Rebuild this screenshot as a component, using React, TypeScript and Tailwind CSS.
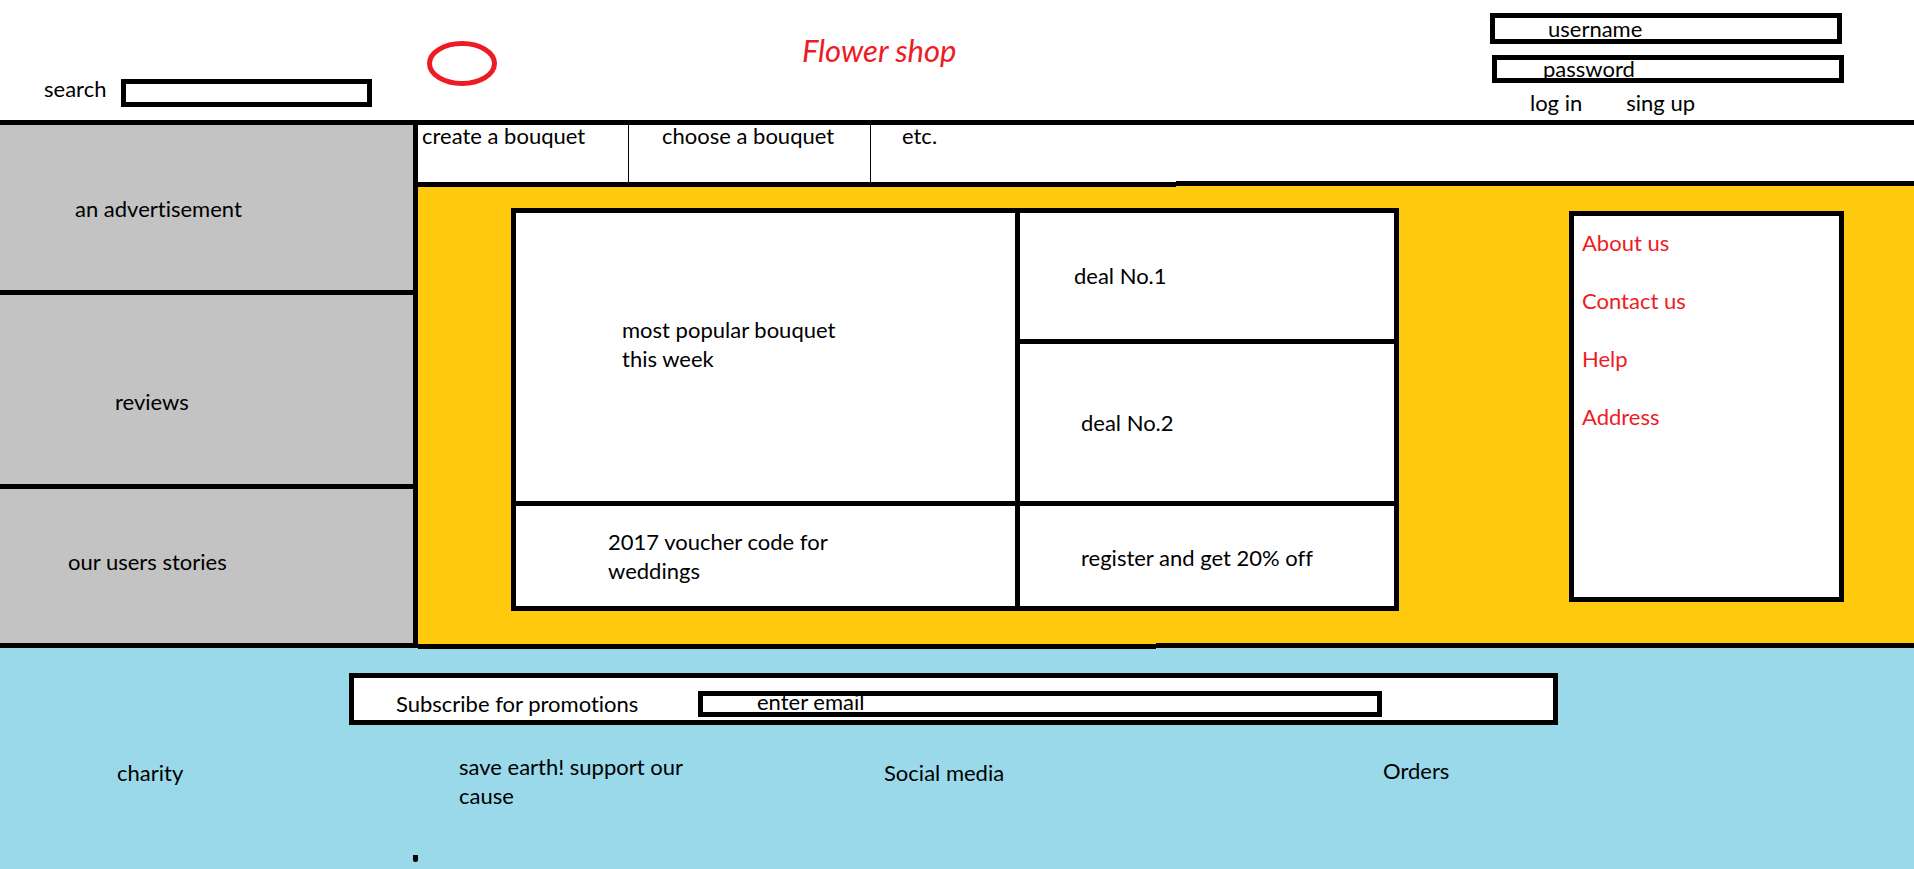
import type { ReactNode } from "react";

const fieldClass =
  "block border-5 border-black bg-white text-black outline-none placeholder:text-black placeholder:opacity-100";

function SideCell({ className, children }: { className: string; children: ReactNode }) {
  return <section className={`bg-[#c3c3c3] ${className}`}>{children}</section>;
}

function Header() {
  return (
    <header className="flex h-[125px] items-start border-b-5 border-black bg-white">
      <form role="search" className="flex w-[418px] shrink-0 items-start pt-[73px] pl-11">
        <label htmlFor="search" className="w-[77px] pt-px">
          search
        </label>
        <input id="search" type="search" className={`${fieldClass} mt-1.5 h-7 w-[251px] px-2`} />
      </form>
      <svg
        viewBox="0 0 70 46"
        className="mt-[41px] ml-[9px] h-[46px] w-[70px] shrink-0"
        fill="none"
        stroke="#ed1c24"
        strokeWidth="5"
        aria-hidden="true"
      >
        <ellipse cx="35" cy="22.5" rx="32.5" ry="20" />
      </svg>
      <h1 className="mt-8 ml-[305px] text-[31px] leading-9 whitespace-nowrap text-[#ed1c24] italic">
        Flower shop
      </h1>
      <form className="mr-[70px] ml-auto w-[354px] shrink-0 pt-[13px]">
        <input
          type="text"
          aria-label="username"
          placeholder="username"
          className={`${fieldClass} h-[31px] w-[352px] pl-[53px]`}
        />
        <input
          type="password"
          aria-label="password"
          placeholder="password"
          className={`${fieldClass} mt-[11px] ml-0.5 h-7 w-[352px] pb-0.5 pl-[46px]`}
        />
        <div className="mt-[5px] flex gap-11 pl-10">
          <button type="submit">log in</button>
          <button type="button">sing up</button>
        </div>
      </form>
    </header>
  );
}

function Sidebar() {
  return (
    <aside className="flex w-[418px] shrink-0 flex-col border-r-5 border-black">
      <SideCell className="h-[170px] border-b-5 border-black pt-[69px] pl-[75px]">
        an advertisement
      </SideCell>
      <SideCell className="h-[194px] border-b-5 border-black pt-[92px] pl-[115px]">
        reviews
      </SideCell>
      <SideCell className="grow pt-[58px] pl-[68px]">our users stories</SideCell>
    </aside>
  );
}

function Nav() {
  return (
    <nav className="flex h-[57px] bg-white leading-5">
      <a href="#create" className="w-[211px] border-r border-black pt-px pl-1">
        create a bouquet
      </a>
      <a href="#choose" className="w-[242px] border-r border-black pt-px pl-[33px]">
        choose a bouquet
      </a>
      <a href="#etc" className="pt-px pl-[31px]">
        etc.
      </a>
    </nav>
  );
}

function Deals() {
  return (
    <section className="mt-[21px] grid h-[403px] flex-1 grid-cols-[499fr_374fr] grid-rows-[126fr_157fr_100fr] gap-[5px] border-5 border-black bg-black">
      <div className="row-span-2 bg-white pt-[102px] pl-[106px]">
        <p className="w-[250px]">most popular bouquet this week</p>
      </div>
      <div className="bg-white pt-12 pl-[54px]">deal No.1</div>
      <div className="bg-white pt-16 pl-[61px]">deal No.2</div>
      <div className="bg-white pt-[21px] pl-[92px]">
        <p className="w-[250px]">2017 voucher code for weddings</p>
      </div>
      <div className="bg-white pt-[37px] pl-[61px]">register and get 20% off</div>
    </section>
  );
}

function InfoPanel() {
  return (
    <nav className="mt-6 flex h-[391px] w-[275px] shrink-0 flex-col items-start gap-[29px] border-5 border-black bg-white pt-3 pl-2 text-[#ed1c24]">
      <a href="#about">About us</a>
      <a href="#contact">Contact us</a>
      <a href="#help">Help</a>
      <a href="#address">Address</a>
    </nav>
  );
}

function Footer() {
  return (
    <footer className="relative grow bg-[#99d9ea] pt-6">
      <form className="mr-[356px] ml-[349px] flex h-[52px] items-start border-5 border-black bg-white">
        <label htmlFor="email" className="w-[344px] shrink-0 pt-[11px] pl-[42px]">
          Subscribe for promotions
        </label>
        <input
          id="email"
          type="email"
          placeholder="enter email"
          className={`${fieldClass} mt-[13px] mr-[171px] h-[26px] min-w-0 flex-1 pb-1.5 pl-[54px]`}
        />
      </form>
      <div className="grid grid-cols-[342fr_425fr_499fr_531fr] pt-[27px] pl-[117px]">
        <a href="#charity" className="pt-1.5">
          charity
        </a>
        <a href="#earth" className="w-[250px]">
          save earth! support our cause
        </a>
        <a href="#social" className="pt-1.5">
          Social media
        </a>
        <a href="#orders" className="pt-1">
          Orders
        </a>
      </div>
      <span className="absolute bottom-[7px] left-[413px] h-[7px] w-[5px] rounded-b-sm bg-black" />
    </footer>
  );
}

export default function App() {
  return (
    <div className="flex min-h-screen flex-col bg-white font-['Lato',sans-serif] text-[22px] leading-[29px] text-black [font-variant-ligatures:none]">
      <Header />
      <div className="flex h-[518px]">
        <Sidebar />
        <div className="flex min-w-0 flex-1 flex-col bg-[#ffc90e]">
          <Nav />
          <div className="flex h-[5px]">
            <span className="w-[758px] bg-black" />
            <span className="-mt-px mb-px flex-1 bg-black" />
          </div>
          <main className="flex grow items-start gap-[170px] pr-[70px] pl-[93px]">
            <Deals />
            <InfoPanel />
          </main>
        </div>
      </div>
      <div className="flex h-1.5 bg-[#99d9ea]">
        <span className="w-[418px] border-b border-[#99d9ea] bg-black" />
        <span className="w-[738px] border-t border-[#ffc90e] bg-black" />
        <span className="flex-1 border-b border-[#99d9ea] bg-black" />
      </div>
      <Footer />
    </div>
  );
}
